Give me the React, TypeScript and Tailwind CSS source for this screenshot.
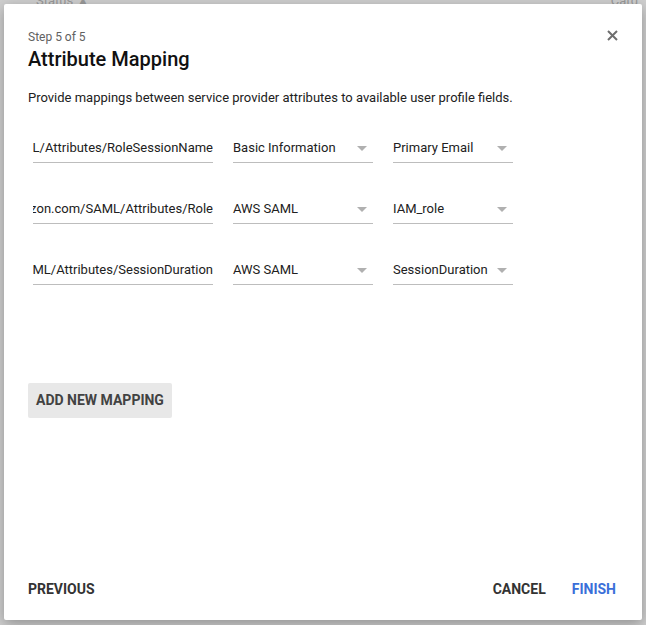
const rows = [
  { attr: 'https://aws.amazon.com/SAML/Attributes/RoleSessionName', group: 'Basic Information', field: 'Primary Email' },
  { attr: 'https://aws.amazon.com/SAML/Attributes/Role', group: 'AWS SAML', field: 'IAM_role' },
  { attr: 'https://aws.amazon.com/SAML/Attributes/SessionDuration', group: 'AWS SAML', field: 'SessionDuration' },
];

function Caret() {
  return (
    <svg width="10" height="5" viewBox="0 0 10 5" className="flex-shrink-0">
      <path d="M0 0h10L5 5z" fill="#b0b0b0" />
    </svg>
  );
}

function Select({ value, width }: { value: string; width: string }) {
  return (
    <div className={`${width} h-[29px] flex items-center justify-between pr-[6px] border-b border-[#bdbdbd] text-[13px] text-[#212121]`}>
      <span className="whitespace-nowrap">{value}</span>
      <Caret />
    </div>
  );
}

export default function App() {
  return (
    <div className="relative w-[646px] h-[625px] bg-[#cfcfcf] overflow-hidden font-['Roboto','Liberation_Sans',sans-serif]">
      {/* page behind the overlay */}
      <div className="flex justify-between pl-[36px] pr-[8px] -mt-[9px] text-[13px] text-[#9a9a9a]">
        <span>Status ▲</span>
        <span>Card</span>
      </div>

      {/* dialog */}
      <div className="absolute left-[4px] top-[4px] w-[638px] h-[616px] bg-white rounded-[2px] shadow-[0_4px_14px_rgba(0,0,0,0.3)] flex flex-col">
        <button className="absolute right-[22px] top-[23px] w-[16px] h-[16px] flex items-center justify-center">
          <svg width="11" height="11" viewBox="0 0 11 11">
            <path d="M1 1l9 9M10 1l-9 9" stroke="#6e6e6e" strokeWidth="2" />
          </svg>
        </button>

        <div className="pl-[24px] pt-[25px]">
          <p className="text-[12px] leading-4 text-[#616161]">Step 5 of 5</p>
          <h1 className="text-[20px] leading-7 font-medium text-[#111]">Attribute Mapping</h1>
          <p className="text-[13px] leading-5 text-[#212121] mt-[15px]">
            Provide mappings between service provider attributes to available user profile fields.
          </p>
        </div>

        {/* mapping rows */}
        <div className="pl-[29px] mt-[26px] flex flex-col gap-[32px]">
          {rows.map(r => (
            <div key={r.attr} className="flex items-center gap-[20px]">
              <div className="w-[180px] h-[29px] flex items-center justify-end overflow-hidden border-b border-[#bdbdbd] text-[13px] text-[#212121]">
                <span className="whitespace-nowrap">{r.attr}</span>
              </div>
              <Select value={r.group} width="w-[140px]" />
              <Select value={r.field} width="w-[120px]" />
            </div>
          ))}
        </div>

        <div className="pl-[24px] mt-[98px]">
          <button className="h-[35px] px-[8px] rounded-[2px] bg-[#e8e8e8] text-[14px] font-bold text-[#424242]">
            ADD NEW MAPPING
          </button>
        </div>

        {/* footer */}
        <div className="mt-auto mb-[20px] pl-[24px] pr-[26px] flex items-center justify-between text-[14px] font-bold">
          <button className="text-[#333]">PREVIOUS</button>
          <div className="flex items-center gap-[26px]">
            <button className="text-[#333]">CANCEL</button>
            <button className="text-[#3a6fd9]">FINISH</button>
          </div>
        </div>
      </div>
    </div>
  );
}
